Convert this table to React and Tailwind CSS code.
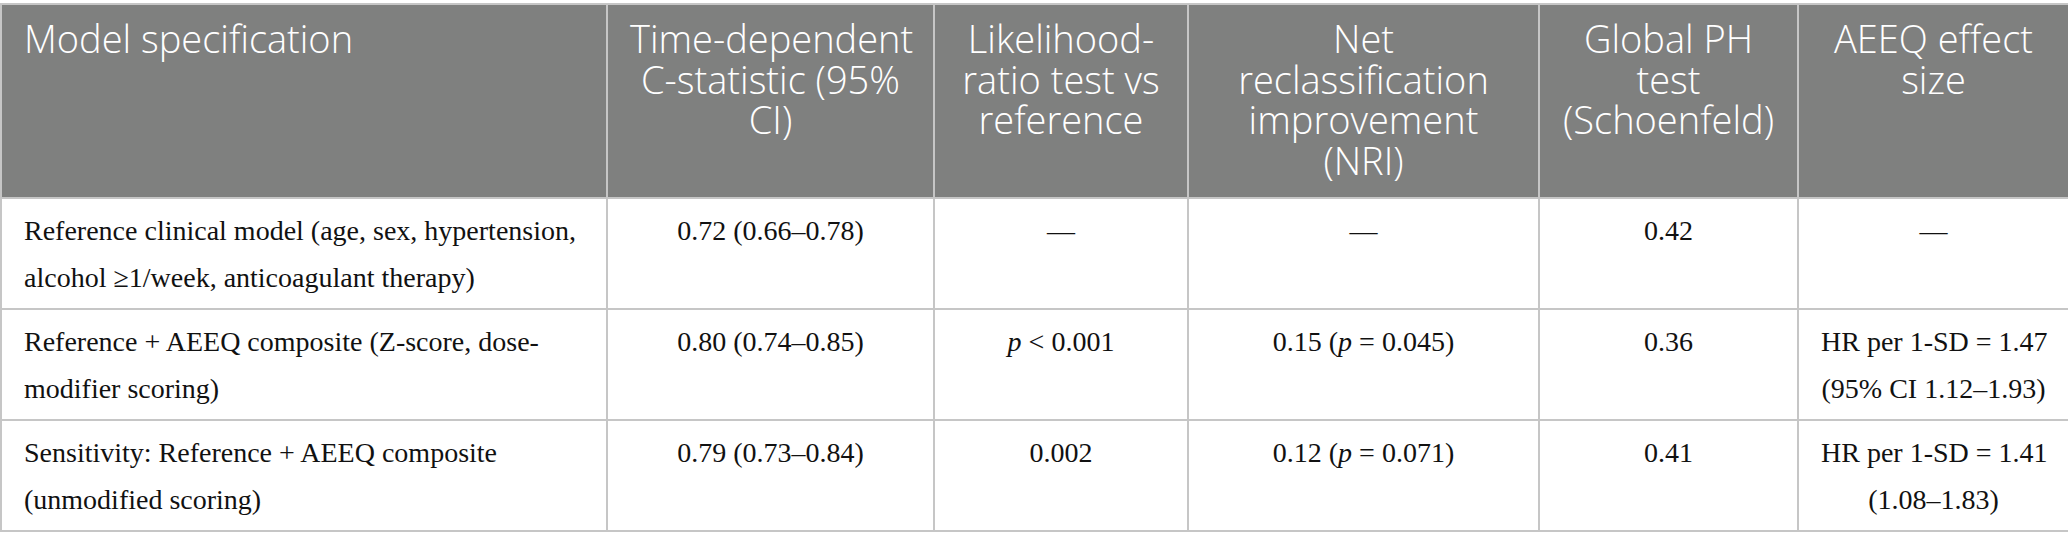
import React from 'react'

const cols = ['w-[606px]', 'w-[327px]', 'w-[254px]', 'w-[351px]', 'w-[259px]', 'w-[271px]']

const headers = [
  ['Model specification'],
  ['Time-dependent', 'C-statistic (95%', 'CI)'],
  ['Likelihood-', 'ratio test vs', 'reference'],
  ['Net', 'reclassification', 'improvement', '(NRI)'],
  ['Global PH', 'test', '(Schoenfeld)'],
  ['AEEQ effect', 'size'],
]

const P = () => <i>p</i>

const rows = [
  [
    ['Reference clinical model (age, sex, hypertension,', 'alcohol \u22651/week, anticoagulant therapy)'],
    ['0.72 (0.66\u20130.78)'],
    ['\u2014'],
    ['\u2014'],
    ['0.42'],
    ['\u2014'],
  ],
  [
    ['Reference + AEEQ composite (Z-score, dose-', 'modifier scoring)'],
    ['0.80 (0.74\u20130.85)'],
    [<><P /> &lt; 0.001</>],
    [<>0.15 (<P /> = 0.045)</>],
    ['0.36'],
    ['HR per 1-SD = 1.47', '(95% CI 1.12\u20131.93)'],
  ],
  [
    ['Sensitivity: Reference + AEEQ composite', '(unmodified scoring)'],
    ['0.79 (0.73\u20130.84)'],
    ['0.002'],
    [<>0.12 (<P /> = 0.071)</>],
    ['0.41'],
    ['HR per 1-SD = 1.41', '(1.08\u20131.83)'],
  ],
]

function Lines({ lines }) {
  return lines.map((l, i) => (
    <span key={i} className="block whitespace-nowrap">{l}</span>
  ))
}

export default function App() {
  return (
    <div className="w-[2068px] h-[550px] bg-white pt-[3px]">
      <table className="table-fixed border-collapse w-[2068px]">
        <colgroup>
          {cols.map((c, i) => <col key={i} className={c} />)}
        </colgroup>
        <thead>
          <tr className="bg-[#7f807f] h-[194px]">
            {headers.map((h, i) => (
              <th
                key={i}
                className={`align-top pt-[13px] px-[22px] font-light text-white text-[38px] leading-[40.5px] font-['Open_Sans',sans-serif] border-2 border-[#c6c6c6] ${i === 0 ? 'text-left' : 'text-center'}`}
              >
                <Lines lines={h} />
              </th>
            ))}
          </tr>
        </thead>
        <tbody>
          {rows.map((r, ri) => (
            <tr key={ri} className="h-[111px]">
              {r.map((c, ci) => (
                <td
                  key={ci}
                  className={`align-top pt-[8px] pb-0 px-[22px] text-[28px] leading-[47px] text-[#111] font-['Liberation_Serif',serif] border-2 border-[#c6c6c6] ${ci === 0 ? 'text-left' : 'text-center'}`}
                >
                  <Lines lines={c} />
                </td>
              ))}
            </tr>
          ))}
        </tbody>
      </table>
    </div>
  )
}
